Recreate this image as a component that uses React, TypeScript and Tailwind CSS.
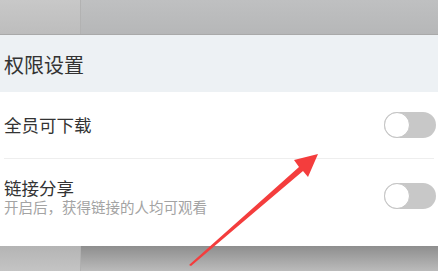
import React from "react";

function Toggle() {
  return (
    <div className="relative w-[52px] h-[26px] rounded-full bg-[#c8c8c8]">
      <div className="absolute left-0 top-0 w-[26px] h-[26px] rounded-full bg-white border border-[#c4c4c4]" />
    </div>
  );
}

export default function App() {
  return (
    <div
      className="relative w-[438px] h-[271px] overflow-hidden flex flex-col"
      style={{ fontFamily: '"Noto Sans CJK SC", "Noto Sans", sans-serif' }}
    >
      <div className="h-[35px] flex shrink-0 border-b border-[#a9a9a9]">
        <div className="w-[81px] bg-gradient-to-b from-[#c8c8c8] to-[#bdbdbd] border-r border-[#b2b2b2]" />
        <div className="flex-1 bg-gradient-to-b from-[#bfc0c1] to-[#b6b7b8]" />
      </div>
      <div className="h-[57px] shrink-0 bg-[#edf1f4] flex items-center px-[4px]">
        <span className="text-[20px] text-[#333] leading-none mt-[2px]">权限设置</span>
      </div>
      <div className="h-[66px] shrink-0 bg-white flex items-center justify-between pl-[4px] pr-[2px]">
        <span className="text-[17.5px] text-[#333] leading-none">全员可下载</span>
        <Toggle />
      </div>
      <div className="h-[1px] shrink-0 bg-white px-[4px]">
        <div className="h-full bg-[#eeeeee]" />
      </div>
      <div className="h-[87px] shrink-0 bg-white flex items-start justify-between pl-[4px] pr-[2px]">
        <div className="pt-[19px] flex flex-col">
          <span className="text-[17.5px] text-[#333] leading-[20px]">链接分享</span>
          <span className="text-[14.5px] text-[#a3a3a3] leading-[16px] mt-[1px]">开启后，获得链接的人均可观看</span>
        </div>
        <div className="mt-[24px]">
          <Toggle />
        </div>
      </div>
      <div className="flex-1 flex">
        <div className="w-[81px] bg-gradient-to-b from-[#b4b4b4] to-[#c4c4c4] border-r border-[#b0b0b0]" />
        <div className="flex-1 bg-gradient-to-b from-[#8e8e8e] to-[#bbbbbb]" />
      </div>
      <svg className="absolute left-0 top-0" width="438" height="271" viewBox="0 0 438 271">
        <polygon
          points="189,265 299,167 294,160 318,154 308,177 303,171 191,266"
          fill="#f43d3d"
        />
      </svg>
    </div>
  );
}
